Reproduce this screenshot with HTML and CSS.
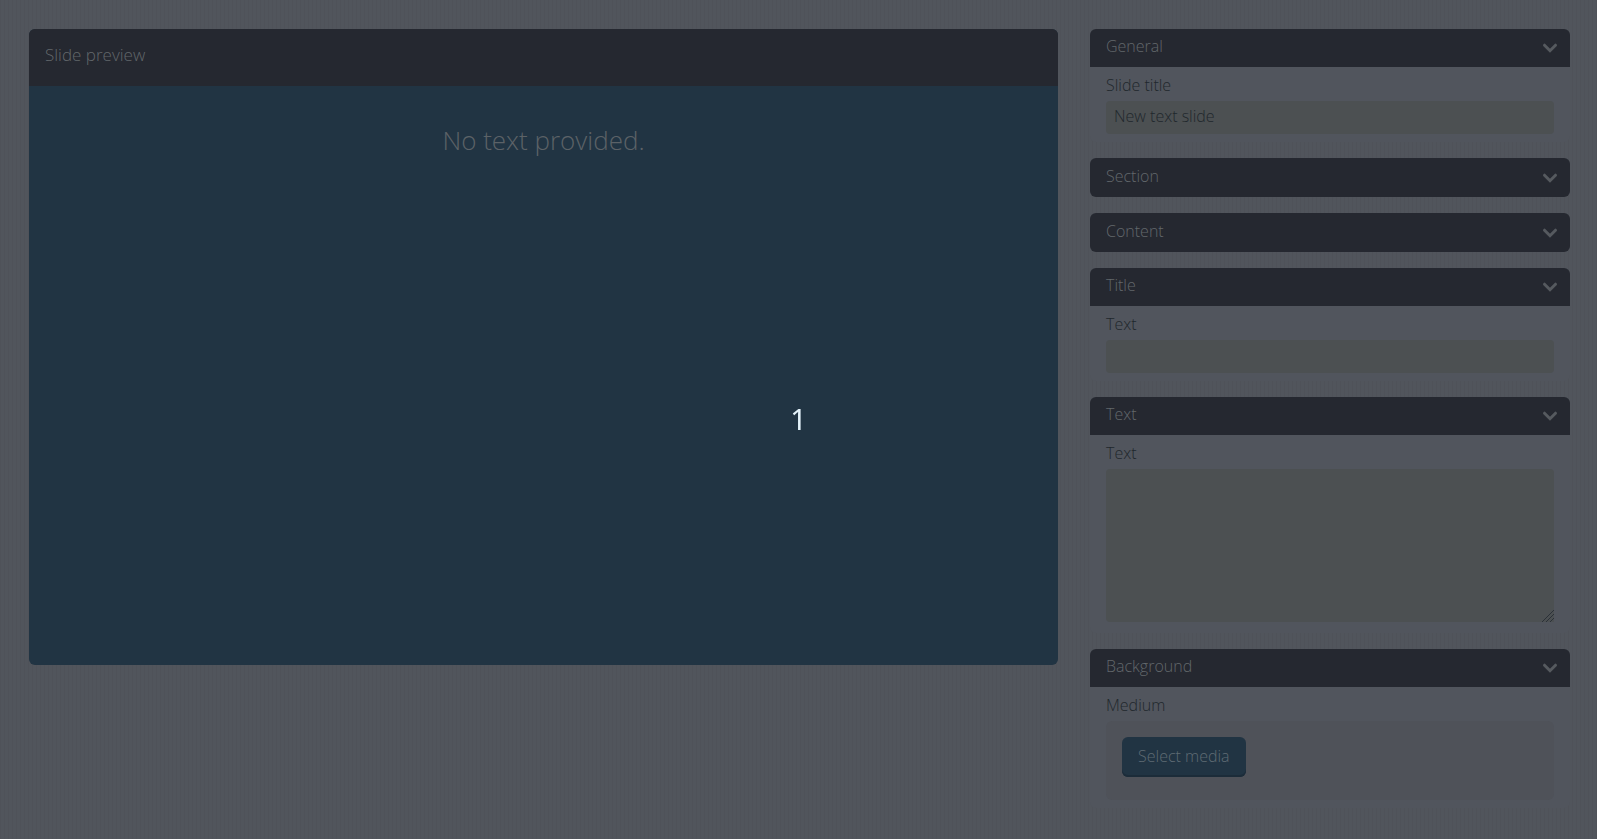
FILE: index.html
```html
<!DOCTYPE html>
<html lang="en">
<head>
    <meta charset="UTF-8">
    <title>Slide editor</title>
    <link rel="stylesheet" href="styles.css">
</head>
<body>
<svg class="defs" width="0" height="0">
    <symbol id="chevron" viewBox="0 0 16 16">
        <path d="M2.5 5.2L8 10.7L13.5 5.2" fill="none" stroke="currentColor" stroke-width="3" stroke-linecap="round"/>
    </symbol>
</svg>
<div class="editor">
    <main class="preview">
        <h1 class="preview-title">Slide preview</h1>
        <div class="slide">
            <p class="slide-text">No text provided.</p>
        </div>
    </main>
    <form class="options">
        <section class="panel">
            <button type="button" class="panel-header">General <svg class="chevron"><use href="#chevron"/></svg></button>
            <div class="panel-body">
                <label for="slide-title">Slide title</label>
                <input class="field" type="text" id="slide-title" value="New text slide">
            </div>
        </section>
        <section class="panel">
            <button type="button" class="panel-header closed">Section <svg class="chevron"><use href="#chevron"/></svg></button>
        </section>
        <section class="panel">
            <button type="button" class="panel-header closed">Content <svg class="chevron"><use href="#chevron"/></svg></button>
        </section>
        <section class="panel">
            <button type="button" class="panel-header">Title <svg class="chevron"><use href="#chevron"/></svg></button>
            <div class="panel-body">
                <label for="title-text">Text</label>
                <input class="field" type="text" id="title-text">
            </div>
        </section>
        <section class="panel">
            <button type="button" class="panel-header">Text <svg class="chevron"><use href="#chevron"/></svg></button>
            <div class="panel-body">
                <label for="text-text">Text</label>
                <textarea class="field area" id="text-text"></textarea>
            </div>
        </section>
        <section class="panel">
            <button type="button" class="panel-header">Background <svg class="chevron"><use href="#chevron"/></svg></button>
            <div class="panel-body">
                <label for="select-media">Medium</label>
                <div class="media">
                    <button type="button" class="btn" id="select-media">Select media</button>
                </div>
            </div>
        </section>
    </form>
</div>
<div class="overlay">1</div>
</body>
</html>
```

FILE: styles.css
```css
* {
    box-sizing: border-box;
    margin: 0;
    padding: 0;
}

body {
    min-height: 100vh;
    background: #50545c repeating-linear-gradient(90deg, #4f5259 0 1px, #51555c 1px 4px);
    color: #1f272c;
    font: 300 16px/24px "Open Sans", "Noto Sans", sans-serif;
}

button, input, textarea {
    border: 0;
    color: inherit;
    font: inherit;
}

.defs {
    position: absolute;
}

.editor {
    display: flex;
    align-items: flex-start;
    gap: 32px;
    padding: 29px 27px 29px 29px;
}

.preview {
    flex: 1;
    overflow: hidden;
    border-radius: 6px;
    background: #213443;
}

.preview-title {
    padding: 14px 16px 19px;
    background: #252830;
    color: #62676b;
    font-size: 17px;
    font-weight: 300;
    line-height: 24px;
}

.slide {
    aspect-ratio: 16 / 9;
    padding-top: 34px;
    text-align: center;
}

.slide-text {
    color: #5c6267;
    font-size: 26px;
    line-height: 40px;
}

.options {
    width: 480px;
}

.panel {
    margin-bottom: 16px;
    border-radius: 6px;
    background: #51555d;
}

.panel-header {
    display: flex;
    justify-content: space-between;
    align-items: center;
    width: 100%;
    height: 38px;
    padding: 0 12px 4px 16px;
    border-radius: 6px 6px 0 0;
    background: #252830;
    color: #62676b;
    text-align: left;
}

.panel-header.closed {
    height: 39px;
    border-radius: 6px;
}

.chevron {
    width: 16px;
    height: 16px;
    margin-top: 4px;
    color: #565a5f;
}

.panel-body {
    padding: 6px 16px 8px;
}

.panel-body label {
    display: block;
    padding-bottom: 4px;
}

.field {
    display: block;
    width: 100%;
    height: 33px;
    padding: 0 8px 3px;
    border-radius: 4px;
    background: #4c5052;
}

.area {
    height: 153px;
    margin-bottom: 3px;
}

.area::-webkit-resizer {
    background: linear-gradient(135deg, #4c5052 60%, transparent 60%), repeating-linear-gradient(135deg, #2b3138 0 1px, #4c5052 1px 3px);
}

.media {
    padding: 16px 16px 23px;
    border-radius: 6px;
    background: #4f5259;
}

.btn {
    display: block;
    height: 40px;
    padding: 0 16px 2px;
    border-radius: 6px;
    background: #213443;
    box-shadow: inset 0 -2px #1c2c39;
    color: #5f6b73;
}

/* countdown shown over the dimmed editor */
.overlay {
    position: fixed;
    inset: 0;
    display: flex;
    justify-content: center;
    align-items: center;
    padding-bottom: 2px;
    color: #e4f2fa;
    font: 400 29px/40px "Noto Sans", sans-serif;
}
```
